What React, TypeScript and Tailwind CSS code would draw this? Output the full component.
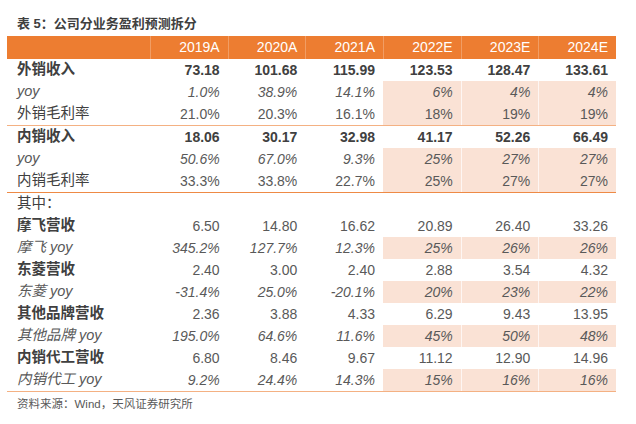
import React from 'react';

type Row = {
  label: string;
  values: string[];
  kind: 'main' | 'sub' | 'yoy' | 'plain' | 'note';
  line?: 'light' | 'strong';
};

const YEARS = ['2019A', '2020A', '2021A', '2022E', '2023E', '2024E'];

const ROWS: Row[] = [
  { label: '外销收入', kind: 'main', values: ['73.18', '101.68', '115.99', '123.53', '128.47', '133.61'] },
  { label: 'yoy', kind: 'yoy', values: ['1.0%', '38.9%', '14.1%', '6%', '4%', '4%'] },
  { label: '外销毛利率', kind: 'plain', values: ['21.0%', '20.3%', '16.1%', '18%', '19%', '19%'], line: 'light' },
  { label: '内销收入', kind: 'main', values: ['18.06', '30.17', '32.98', '41.17', '52.26', '66.49'] },
  { label: 'yoy', kind: 'yoy', values: ['50.6%', '67.0%', '9.3%', '25%', '27%', '27%'] },
  { label: '内销毛利率', kind: 'plain', values: ['33.3%', '33.8%', '22.7%', '25%', '27%', '27%'], line: 'strong' },
  { label: '其中：', kind: 'note', values: ['', '', '', '', '', ''] },
  { label: '摩飞营收', kind: 'sub', values: ['6.50', '14.80', '16.62', '20.89', '26.40', '33.26'] },
  { label: '摩飞 yoy', kind: 'yoy', values: ['345.2%', '127.7%', '12.3%', '25%', '26%', '26%'] },
  { label: '东菱营收', kind: 'sub', values: ['2.40', '3.00', '2.40', '2.88', '3.54', '4.32'] },
  { label: '东菱 yoy', kind: 'yoy', values: ['-31.4%', '25.0%', '-20.1%', '20%', '23%', '22%'] },
  { label: '其他品牌营收', kind: 'sub', values: ['2.36', '3.88', '4.33', '6.29', '9.43', '13.95'] },
  { label: '其他品牌 yoy', kind: 'yoy', values: ['195.0%', '64.6%', '11.6%', '45%', '50%', '48%'] },
  { label: '内销代工营收', kind: 'sub', values: ['6.80', '8.46', '9.67', '11.12', '12.90', '14.96'] },
  { label: '内销代工 yoy', kind: 'yoy', values: ['9.2%', '24.4%', '14.3%', '15%', '16%', '16%'], line: 'light' },
];

const FONT = { fontFamily: '"Liberation Sans", "Noto Sans CJK SC", sans-serif' };

function DataRow({ row }: { row: Row }) {
  // forecast cells of yoy / margin rows get the peach fill
  const shaded = row.kind === 'yoy' || row.kind === 'plain';
  const border =
    row.line === 'light'
      ? 'border-b border-[#F4B183]'
      : row.line === 'strong'
        ? 'border-b border-[#EE8A45]'
        : '';

  const labelCls =
    row.kind === 'main' || row.kind === 'sub'
      ? 'font-bold text-[#404040]'
      : row.kind === 'yoy'
        ? 'italic text-[#595959]'
        : 'text-[#404040]';

  const valueCls =
    row.kind === 'main'
      ? 'font-bold text-[#404040]'
      : row.kind === 'yoy'
        ? 'italic text-[#595959]'
        : 'text-[#595959]';

  return (
    <div className={`grid grid-cols-[143px_repeat(6,1fr)] ${border}`}>
      <div className={`h-[22px] pl-[10px] flex items-center text-[14.5px] ${labelCls}`}>{row.label}</div>
      {row.values.map((v, i) => (
        <div
          key={i}
          className={`h-[22px] pr-[8px] flex items-center justify-end text-[14px] ${valueCls} ${
            shaded && i >= 3 ? 'bg-[#FAE2D5]' : ''
          } ${shaded && i > 3 ? 'border-l border-white/70' : ''}`}
        >
          {v}
        </div>
      ))}
    </div>
  );
}

export default function App() {
  return (
    <div className="w-[636px] h-[424px] bg-white" style={FONT}>
      <div className="pl-[17px] pt-[15px] h-[36px] text-[13px] font-bold text-[#404040] leading-[18px]">
        表 5：公司分业务盈利预测拆分
      </div>
      <div className="ml-[7px] w-[609px]">
        <div className="grid grid-cols-[143px_repeat(6,1fr)] bg-[#ED7D31] h-[23px]">
          <div />
          {YEARS.map((y) => (
            <div
              key={y}
              className="border-l border-white/25 pr-[8px] flex items-center justify-end text-[14px] text-white"
            >
              {y}
            </div>
          ))}
        </div>
        {ROWS.map((r, i) => (
          <DataRow key={i} row={r} />
        ))}
      </div>
      <div className="pl-[17px] pt-[4px] text-[11.5px] text-[#595959]">资料来源：Wind，天风证券研究所</div>
    </div>
  );
}
